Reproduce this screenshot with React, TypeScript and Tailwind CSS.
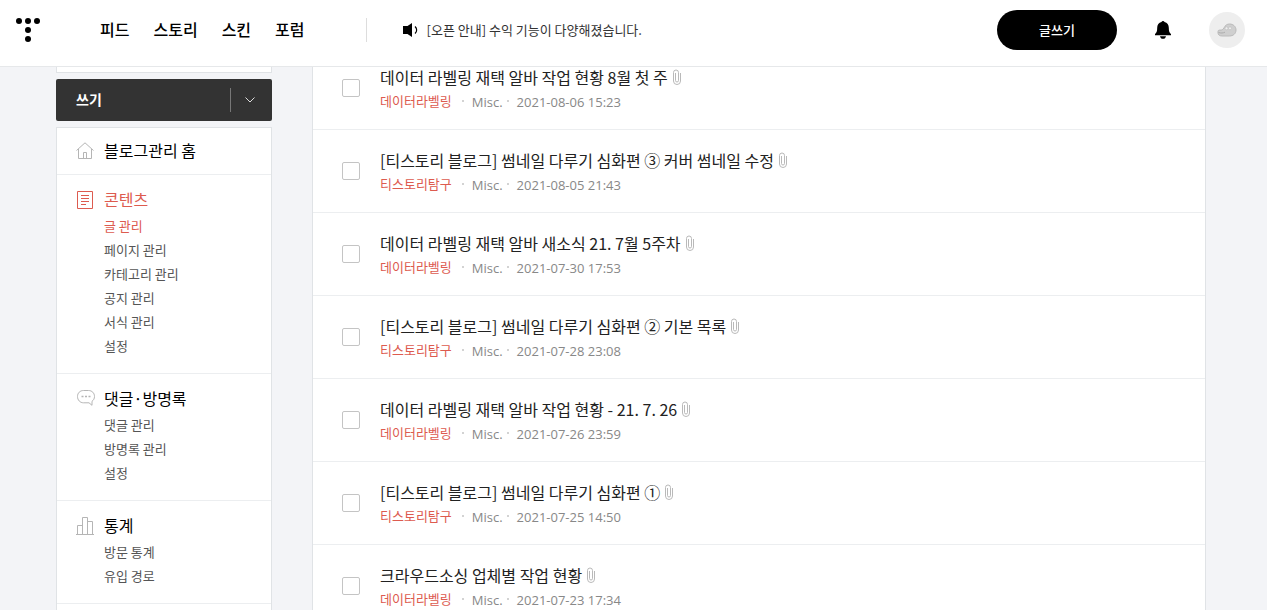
import type { ReactNode } from "react";

type Post = { title: string; category: string; date: string };
type Section = { title: string; icon: ReactNode; active?: boolean; items: string[] };

const posts: Post[] = [
  { title: "데이터 라벨링 재택 알바 작업 현황 8월 첫 주", category: "데이터라벨링", date: "2021-08-06 15:23" },
  { title: "[티스토리 블로그] 썸네일 다루기 심화편 ③ 커버 썸네일 수정", category: "티스토리탐구", date: "2021-08-05 21:43" },
  { title: "데이터 라벨링 재택 알바 새소식 21. 7월 5주차", category: "데이터라벨링", date: "2021-07-30 17:53" },
  { title: "[티스토리 블로그] 썸네일 다루기 심화편 ② 기본 목록", category: "티스토리탐구", date: "2021-07-28 23:08" },
  { title: "데이터 라벨링 재택 알바 작업 현황 - 21. 7. 26", category: "데이터라벨링", date: "2021-07-26 23:59" },
  { title: "[티스토리 블로그] 썸네일 다루기 심화편 ①", category: "티스토리탐구", date: "2021-07-25 14:50" },
  { title: "크라우드소싱 업체별 작업 현황", category: "데이터라벨링", date: "2021-07-23 17:34" },
];

function Logo() {
  return (
    <svg width="24" height="24" viewBox="0 0 24 24" fill="#000" aria-hidden="true">
      <circle cx="3" cy="3" r="3" />
      <circle cx="12" cy="3" r="3" />
      <circle cx="21" cy="3" r="3" />
      <circle cx="12" cy="12" r="3" />
      <circle cx="12" cy="21" r="3" />
    </svg>
  );
}

function SpeakerIcon() {
  return (
    <svg width="16" height="16" viewBox="0 0 16 16" aria-hidden="true">
      <path d="M0 4h4.500L9 1v14l-4.500-3H0z" fill="#000" />
      <path d="M12 4.500c2.200 2 2.200 5 0 7" fill="none" stroke="#000" strokeWidth="1.200" />
    </svg>
  );
}

function BellIcon() {
  return (
    <svg width="16" height="18" viewBox="0 0 16 18" fill="#000" aria-hidden="true">
      <path d="M8 0c.8 0 1.300.4 1.500 1.100C12.300 1.800 13.800 4 13.800 6.800c0 3.400.6 5 2.200 6.200v1.200H0V13c1.600-1.200 2.200-2.800 2.200-6.200 0-2.800 1.500-5 4.300-5.700C6.700.4 7.200 0 8 0z" />
      <path d="M5 15.200h6c-.3 1.700-1.400 2.600-3 2.600s-2.700-.9-3-2.600z" />
    </svg>
  );
}

function AvatarIcon() {
  return (
    <svg width="20" height="16" viewBox="0 0 20 16" aria-hidden="true">
      <path
        d="M1 9.500c0-1 .8-1.500 2-1.400 1.700.1 3-.4 4-2.200C8.200 3.300 10 2 12.600 2 16.200 2 19 4.600 19 8c0 3.600-2.800 6-6.600 6H5.200C2.500 14 1 12.600 1 10.900z"
        fill="#cfcfcf"
        stroke="#bababa"
      />
      <circle cx="9.500" cy="6.300" r="1.500" fill="#eee" stroke="#bababa" strokeWidth=".6" />
      <circle cx="13" cy="6.300" r="1.500" fill="#eee" stroke="#bababa" strokeWidth=".6" />
      <path d="M1.500 10.500c2.500.8 4.500.6 6.500-.3" fill="none" stroke="#adadad" />
    </svg>
  );
}

function HomeIcon() {
  return (
    <svg width="18" height="18" viewBox="0 0 18 18" fill="none" stroke="#b5b5b5" aria-hidden="true">
      <path d="M.5 8.500 9 .8l8.500 7.700M2.500 7v9.500h13V7M7.500 16.500v-6h3v6" />
    </svg>
  );
}

function ContentIcon() {
  return (
    <svg width="18" height="18" viewBox="0 0 18 18" fill="none" stroke="#dd5b4f" aria-hidden="true">
      <path d="M1.500.5h15v17h-15zM5 4.500h8M5 7.500h8M5 10.500h8M5 13.500h5" />
    </svg>
  );
}

function CommentIcon() {
  return (
    <svg width="18" height="18" viewBox="0 0 18 18" fill="none" stroke="#b5b5b5" overflow="visible" aria-hidden="true">
      <path d="M7.500.5h5c3.500 0 6 2.600 6 6 0 2-.9 3.700-2.500 4.800v4l-3-2.500H7.500c-3.500 0-6-2.800-6-6.300s2.500-6 6-6z" />
      <path d="M5.500 6.500h2M9 6.500h2M12.500 6.500h2" strokeWidth="1.500" />
    </svg>
  );
}

function StatsIcon() {
  return (
    <svg width="18" height="18" viewBox="0 0 18 18" fill="none" stroke="#b5b5b5" aria-hidden="true">
      <path d="M0 17.500h18M1.500 17.500v-9h5M6.500 17.500V.5h5v17M11.500 4.500h5v13" />
    </svg>
  );
}

function ClipIcon() {
  return (
    <svg width="8" height="16" viewBox="0 0 8 16" fill="none" stroke="#b9b9b9" aria-hidden="true">
      <path d="M2.500 4v7.500a1.500 1.500 0 0 0 3 0V3.500a2.500 2.500 0 0 0-5 0V12a3.500 3.500 0 0 0 7 0V4" />
    </svg>
  );
}

const sections: Section[] = [
  { title: "콘텐츠", icon: <ContentIcon />, active: true, items: ["글 관리", "페이지 관리", "카테고리 관리", "공지 관리", "서식 관리", "설정"] },
  { title: "댓글·방명록", icon: <CommentIcon />, items: ["댓글 관리", "방명록 관리", "설정"] },
  { title: "통계", icon: <StatsIcon />, items: ["방문 통계", "유입 경로"] },
];

function Header() {
  return (
    <header className="flex h-[67px] shrink-0 items-center border-b border-[#e6e8ea] bg-white pr-[22px] pb-[6px] pl-4">
      <a href="#" aria-label="티스토리">
        <Logo />
      </a>
      <nav className="ml-[60px] flex items-center gap-6 pb-[2px] text-base font-medium text-black">
        <a href="#">피드</a>
        <a href="#">스토리</a>
        <a href="#">스킨</a>
        <a href="#">포럼</a>
      </nav>
      <div className="ml-[61px] h-6 w-px bg-[#ddd]" />
      <a href="#" className="ml-9 flex items-center gap-2 text-[13px] text-[#333]">
        <SpeakerIcon />
        [오픈 안내] 수익 기능이 다양해졌습니다.
      </a>
      <div className="ml-auto flex items-center">
        <button className="h-10 w-[120px] rounded-full bg-black text-[13px] font-medium text-white">글쓰기</button>
        <button aria-label="알림" className="ml-[38px]">
          <BellIcon />
        </button>
        <button aria-label="프로필" className="ml-[38px] flex size-9 items-center justify-center rounded-full bg-[#eee]">
          <AvatarIcon />
        </button>
      </div>
    </header>
  );
}

function Sidebar() {
  return (
    <aside className="w-[216px] shrink-0">
      <div className="h-[6px] border border-t-0 border-[#e0e3e6] bg-white" />
      <div className="mt-[6px] flex h-[42px] items-center rounded-xs bg-[#333] text-white">
        <a href="#" className="flex-1 pb-[2px] pl-5 text-sm font-bold">쓰기</a>
        <button aria-label="더보기" className="flex h-6 w-[42px] items-center border-l border-[#777] pl-[14px]">
          <svg width="10" height="6" viewBox="0 0 10 6" fill="none" stroke="#ddd" aria-hidden="true">
            <path d="m.5.5 4.500 4.500L9.500.5" />
          </svg>
        </button>
      </div>
      <nav className="mt-[6px] border border-[#e0e3e6] bg-white">
        <a href="#" className="flex h-[46px] items-center gap-[10px] px-[19px] text-base text-black">
          <HomeIcon />
          <span className="pb-[2px]">블로그관리 홈</span>
        </a>
        {sections.map((s) => (
          <section key={s.title} className="border-t border-[#eceef0] px-[19px] pt-[10px] pb-[15px]">
            <h2 className={s.active ? "flex h-[30px] items-center gap-[10px] text-base text-[#dd5b4f]" : "flex h-[30px] items-center gap-[10px] text-base text-black"}>
              {s.icon}
              <span className="pb-[2px]">{s.title}</span>
            </h2>
            <ul className="-mt-px pl-7 text-[13px] leading-6 text-[#555]">
              {s.items.map((item, i) => (
                <li key={item}>
                  <a href="#" className={s.active && i === 0 ? "text-[#dd5b4f]" : ""}>{item}</a>
                </li>
              ))}
            </ul>
          </section>
        ))}
        <div className="h-10 border-t border-[#eceef0]" />
      </nav>
    </aside>
  );
}

function PostRow({ post, index }: { post: Post; index: number }) {
  const id = `post-${index}`;
  return (
    <li className="flex border-b border-[#eceef0] pt-5 pr-7 pb-4 pl-[29px]">
      <input id={id} type="checkbox" className="mt-3 size-[18px] shrink-0 appearance-none rounded-xs border border-[#c4c4c4] bg-white checked:bg-[#333]" />
      <div className="pl-5">
        <label htmlFor={id} className="flex items-center gap-[5px] text-base leading-5 text-[#222]">
          {post.title}
          <ClipIcon />
        </label>
        <div className="mt-[2px] flex text-[13px] leading-6 text-[#888]">
          <a href="#" className="text-[#dd5b4f]">{post.category}</a>
          <div className="flex items-center pt-[2px] pl-[10px] font-['Open_Sans','Noto_Sans_CJK_KR',sans-serif] leading-[22px]">
            <span className="mb-[3px] size-[2px] rounded-full bg-[#c4c4c4]" />
            <span className="ml-2">Misc.</span>
            <span className="mb-[3px] ml-1 size-[2px] rounded-full bg-[#c4c4c4]" />
            <time className="ml-2">{post.date}</time>
          </div>
        </div>
      </div>
    </li>
  );
}

export default function App() {
  return (
    <div className="flex h-screen flex-col overflow-hidden bg-[#f3f4f7] font-['Noto_Sans_CJK_KR',sans-serif]">
      <Header />
      <div className="flex min-h-0 flex-1 gap-10 overflow-hidden pr-[61px] pl-14">
        <Sidebar />
        <main className="min-w-0 flex-1 border-x border-[#e0e3e6] bg-white">
          <ul className="-mt-5">
            {posts.map((p, i) => (
              <PostRow key={p.date} post={p} index={i} />
            ))}
          </ul>
        </main>
      </div>
    </div>
  );
}
